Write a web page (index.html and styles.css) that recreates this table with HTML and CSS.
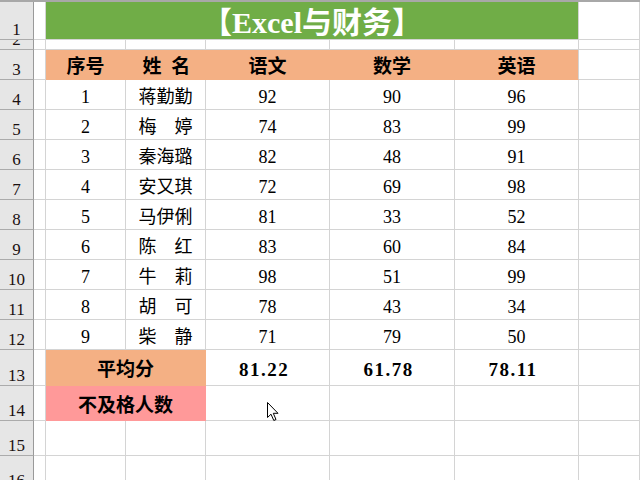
FILE: index.html
```html
<!DOCTYPE html>
<html lang="zh-CN">
<head>
<meta charset="utf-8">
<title>Excel与财务</title>
<link rel="stylesheet" href="styles.css">
</head>
<body>
<div class="sheet">
  <div class="row r1">
    <div class="rh">1</div><div class="c"></div>
    <div class="c title">【Excel与财务】</div>
    <div class="c"></div>
  </div>
  <div class="row r2">
    <div class="rh">2</div><div class="c"></div><div class="c"></div><div class="c"></div><div class="c"></div><div class="c"></div><div class="c"></div><div class="c"></div>
  </div>
  <div class="row">
    <div class="rh">3</div><div class="c"></div>
    <div class="c hd">序号</div><div class="c hd wide">姓 名</div><div class="c hd">语文</div><div class="c hd">数学</div><div class="c hd hd-last">英语</div>
    <div class="c"></div>
  </div>
  <div class="row"><div class="rh">4</div><div class="c"></div><div class="c d">1</div><div class="c d">蒋勤勤</div><div class="c d">92</div><div class="c d">90</div><div class="c d">96</div><div class="c"></div></div>
  <div class="row"><div class="rh">5</div><div class="c"></div><div class="c d">2</div><div class="c d">梅　婷</div><div class="c d">74</div><div class="c d">83</div><div class="c d">99</div><div class="c"></div></div>
  <div class="row"><div class="rh">6</div><div class="c"></div><div class="c d">3</div><div class="c d">秦海璐</div><div class="c d">82</div><div class="c d">48</div><div class="c d">91</div><div class="c"></div></div>
  <div class="row"><div class="rh">7</div><div class="c"></div><div class="c d">4</div><div class="c d">安又琪</div><div class="c d">72</div><div class="c d">69</div><div class="c d">98</div><div class="c"></div></div>
  <div class="row"><div class="rh">8</div><div class="c"></div><div class="c d">5</div><div class="c d">马伊俐</div><div class="c d">81</div><div class="c d">33</div><div class="c d">52</div><div class="c"></div></div>
  <div class="row"><div class="rh">9</div><div class="c"></div><div class="c d">6</div><div class="c d">陈　红</div><div class="c d">83</div><div class="c d">60</div><div class="c d">84</div><div class="c"></div></div>
  <div class="row"><div class="rh">10</div><div class="c"></div><div class="c d">7</div><div class="c d">牛　莉</div><div class="c d">98</div><div class="c d">51</div><div class="c d">99</div><div class="c"></div></div>
  <div class="row"><div class="rh">11</div><div class="c"></div><div class="c d">8</div><div class="c d">胡　可</div><div class="c d">78</div><div class="c d">43</div><div class="c d">34</div><div class="c"></div></div>
  <div class="row"><div class="rh">12</div><div class="c"></div><div class="c d">9</div><div class="c d">柴　静</div><div class="c d">71</div><div class="c d">79</div><div class="c d">50</div><div class="c"></div></div>
  <div class="row r13">
    <div class="rh">13</div><div class="c"></div>
    <div class="c lbl avg">平均分</div>
    <div class="c num">81.22</div><div class="c num">61.78</div><div class="c num">78.11</div>
    <div class="c"></div>
  </div>
  <div class="row r14">
    <div class="rh">14</div><div class="c"></div>
    <div class="c lbl fail">不及格人数</div>
    <div class="c"></div><div class="c"></div><div class="c"></div>
    <div class="c"></div>
  </div>
  <div class="row r15">
    <div class="rh">15</div><div class="c"></div><div class="c"></div><div class="c"></div><div class="c"></div><div class="c"></div><div class="c"></div><div class="c"></div>
  </div>
  <div class="row r15">
    <div class="rh">16</div><div class="c"></div><div class="c"></div><div class="c"></div><div class="c"></div><div class="c"></div><div class="c"></div><div class="c"></div>
  </div>

  <svg class="cursor" width="14" height="20" viewBox="0 0 14 20" aria-hidden="true">
    <path d="M0.5 0.5 L0.5 15.5 L4 12.2 L6.8 18.5 L9 17.5 L6.3 11.3 L11 11.3 Z" fill="#ffffff" stroke="#000000" stroke-width="1" stroke-linejoin="miter"/>
  </svg>
</div>
</body>
</html>
```

FILE: styles.css
```css
html, body {
  margin: 0;
  padding: 0;
  background: #ffffff;
}

body {
  font-family: "Liberation Serif", "Noto Sans CJK SC", serif;
  color: #000000;
  overflow: hidden;
  width: 640px;
  height: 480px;
}

.sheet {
  position: relative;
  border-top: 2px solid #a8a8a8;
}

.row {
  display: grid;
  grid-template-columns: 34px 12px 80px 80px 124px 125px 124px 1fr;
  height: 30px;
}

.r1 { height: 38px; }
.r2 { height: 10px; }
.r13 { height: 36px; }
.r14 { height: 35px; }
.r15 { height: 35px; }

.row > div {
  box-sizing: border-box;
  border-right: 1px solid #d4d4d4;
  border-bottom: 1px solid #d4d4d4;
  display: flex;
  align-items: center;
  justify-content: center;
  overflow: hidden;
  white-space: nowrap;
  min-width: 0;
}

.row > .rh {
  background: #e6e6e6;
  border-right-color: #9a9a9a;
  border-bottom-color: #ababab;
  align-items: flex-end;
  font-size: 17px;
  line-height: 17px;
  padding-bottom: 1px;
  color: #1a1010;
}

.row > .title {
  grid-column: span 5;
  background: #70ad47;
  color: #ffffff;
  font-weight: bold;
  font-size: 30px;
  line-height: 30px;
  padding-top: 5px;
  border-right-color: #d4d4d4;
  border-bottom-color: #d4d4d4;
}

.row > .hd {
  background: #f4b084;
  border-color: #f4b084;
  font-weight: bold;
  font-size: 19px;
  line-height: 20px;
  padding-top: 4px;
}

.row > .wide {
  word-spacing: 5px;
  padding-left: 2px;
}

.row > .hd-last {
  border-right-color: #d4d4d4;
}

.row > .d {
  font-size: 18px;
  line-height: 20px;
  padding-top: 5px;
}

.row > .lbl {
  grid-column: span 2;
  font-weight: bold;
  font-size: 19px;
  line-height: 20px;
  padding-top: 4px;
}

.row > .avg {
  background: #f4b084;
  border-color: #f4b084;
}

.row > .fail {
  background: #ff9999;
  border-color: #ff9999;
  padding-top: 5px;
}

.row > .num {
  font-weight: bold;
  font-size: 19px;
  line-height: 20px;
  letter-spacing: 1.5px;
  padding-top: 4px;
  padding-right: 7px;
}

.cursor {
  position: absolute;
  left: 267px;
  top: 400px;
}
```
